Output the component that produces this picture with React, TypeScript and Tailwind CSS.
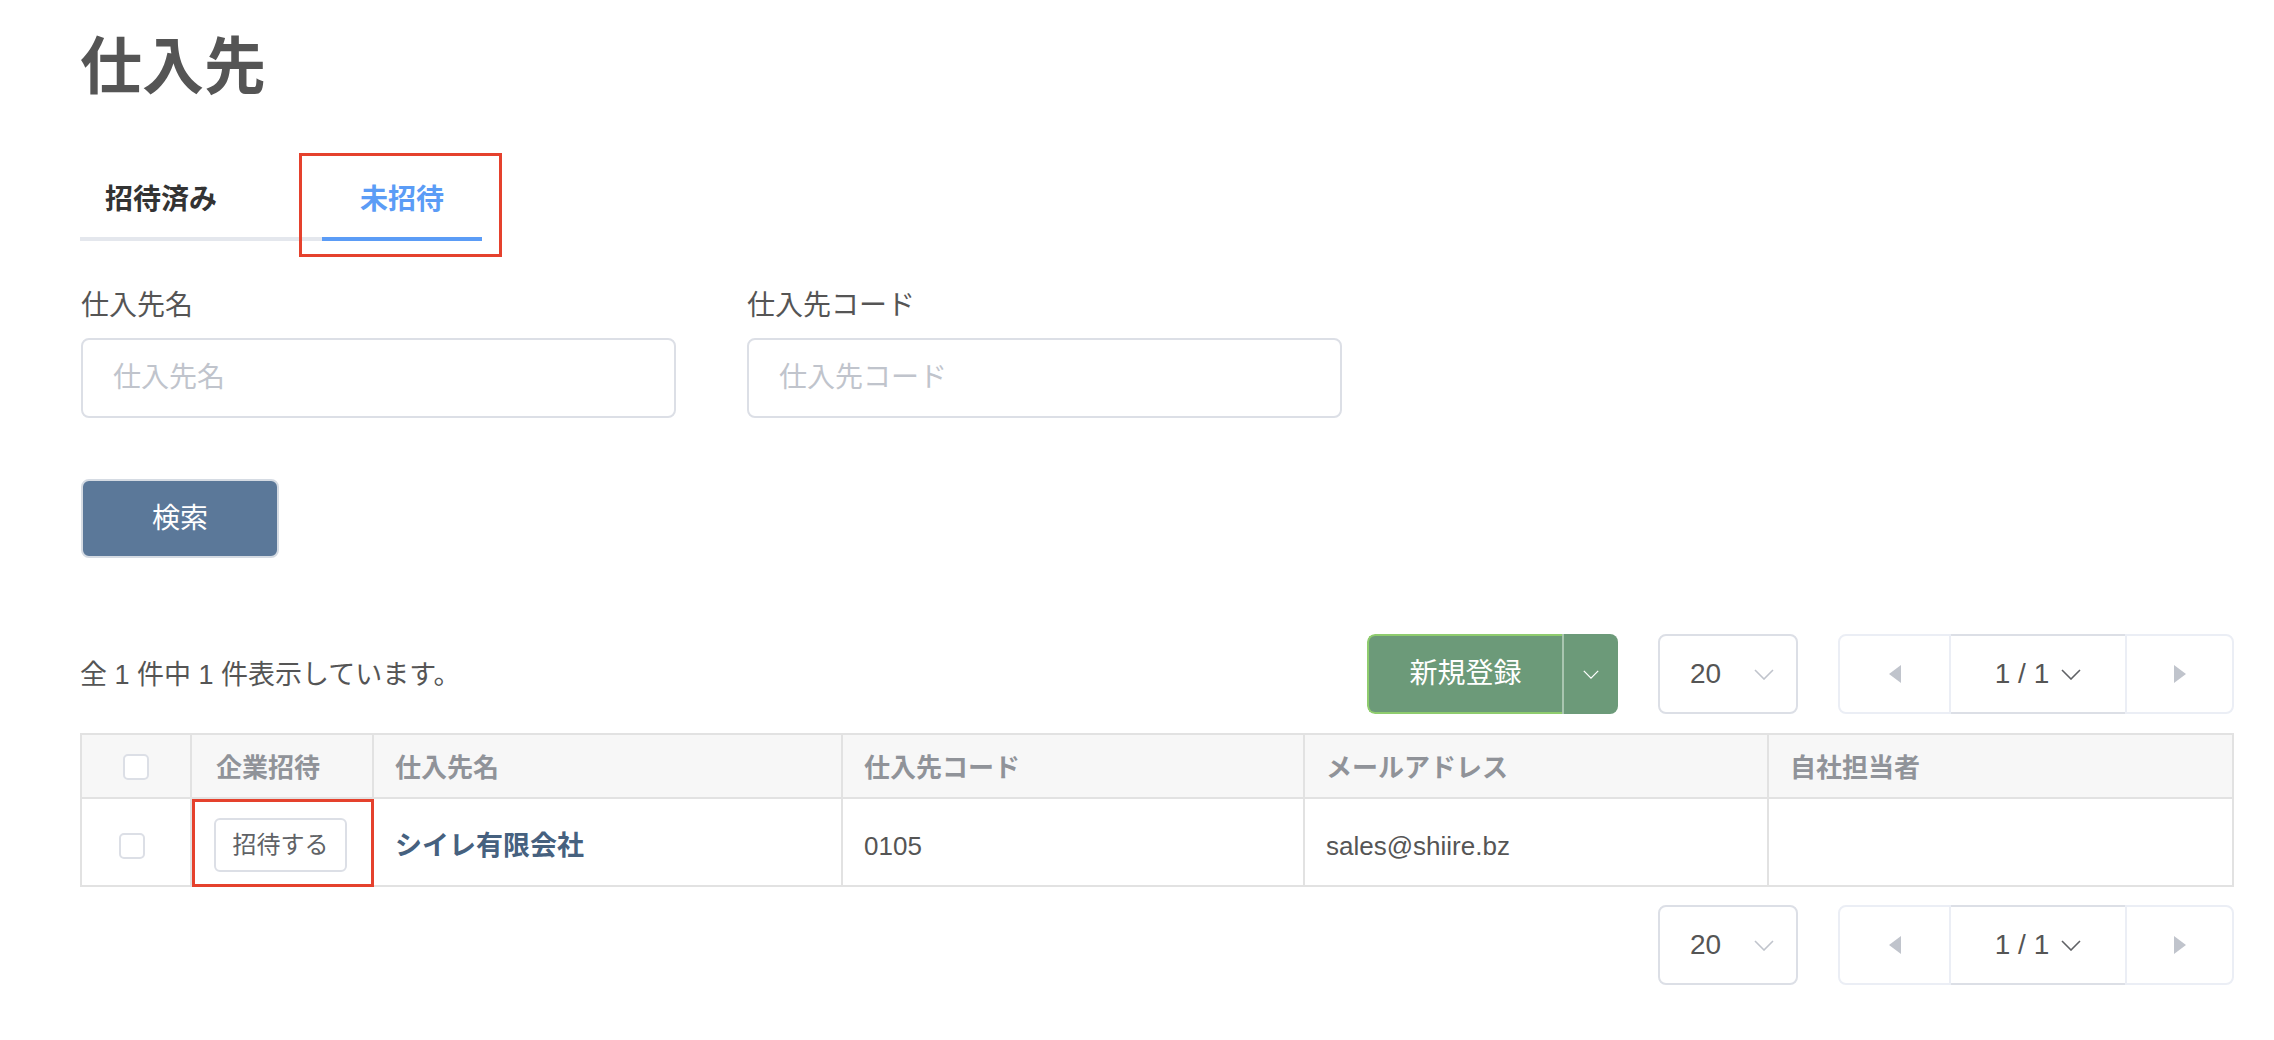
import React from 'react';

function Chevron({ color = '#c0c4cc', w = 20, h = 11 }: { color?: string; w?: number; h?: number }) {
  return (
    <svg width={w} height={h} viewBox="0 0 20 11" fill="none">
      <polyline points="1,1 10,10 19,1" stroke={color} strokeWidth="1.6" />
    </svg>
  );
}

function PageSize() {
  return (
    <div className="flex h-[80px] w-[140px] items-center rounded-[8px] border-2 border-[#dcdfe6] bg-white pl-[30px]">
      <span className="text-[28px] leading-none text-[#555]">20</span>
      <span className="ml-[33px]">
        <Chevron />
      </span>
    </div>
  );
}

function Pager() {
  return (
    <div className="flex h-[80px] w-[396px] rounded-[8px] border-2 border-[#ebeef5] bg-white">
      <div className="flex w-[111px] items-center justify-center border-r-2 border-[#ebeef5]">
        <svg width="12" height="18" viewBox="0 0 12 18">
          <polygon points="12,0 0,9 12,18" fill="#c0c4cc" />
        </svg>
      </div>
      <div className="-my-[2px] flex w-[174px] items-center justify-center gap-[12px] border-y-2 border-[#dcdfe6]">
        <span className="text-[28px] leading-none text-[#555]">1 / 1</span>
        <Chevron color="#606266" w={20} h={11} />
      </div>
      <div className="flex flex-1 items-center justify-center border-l-2 border-[#ebeef5]">
        <svg width="12" height="18" viewBox="0 0 12 18">
          <polygon points="0,0 12,9 0,18" fill="#c0c4cc" />
        </svg>
      </div>
    </div>
  );
}

function Checkbox() {
  return <div className="h-[26px] w-[26px] rounded-[5px] border-2 border-[#dcdfe6] bg-white" />;
}

export default function App() {
  const cols = 'grid grid-cols-[110px_182px_469px_462px_464px_1fr]';

  return (
    <div className="min-h-screen w-full bg-white pl-[80px] pr-[40px] pt-[37px] font-['Liberation_Sans','Noto_Sans_CJK_JP',sans-serif]">
      <h1 className="text-[62px] font-bold leading-none text-[#555]">仕入先</h1>

      {/* tabs */}
      <div className="mt-[87px] flex w-[402px] border-b-4 border-[#e4e7ed] pl-[1px]">
        <div className="w-[241px] pb-[23px] pl-[24px] text-[28px] font-semibold leading-[28px] text-[#333]">
          招待済み
        </div>
        <div className="relative -mb-[4px] w-[160px] border-b-4 border-[#5b9cf6] pb-[23px] text-center text-[28px] font-semibold leading-[28px] text-[#5b9cf6]">
          未招待
          <div className="pointer-events-none absolute -bottom-[20px] -left-[23px] -right-[20px] -top-[33px] border-[3px] border-[#e5412d]" />
        </div>
      </div>

      {/* search form */}
      <div className="mt-[51px] flex gap-[71px] pl-[1px]">
        <div className="flex flex-col">
          <label className="text-[28px] leading-[28px] text-[#555]">仕入先名</label>
          <input
            placeholder="仕入先名"
            className="mt-[18px] h-[80px] w-[595px] rounded-[8px] border-2 border-[#dcdfe6] px-[30px] text-[28px] text-[#555] placeholder-[#c0c4cc] outline-none"
          />
        </div>
        <div className="flex flex-col">
          <label className="text-[28px] leading-[28px] text-[#555]">仕入先コード</label>
          <input
            placeholder="仕入先コード"
            className="mt-[18px] h-[80px] w-[595px] rounded-[8px] border-2 border-[#dcdfe6] px-[30px] text-[28px] text-[#555] placeholder-[#c0c4cc] outline-none"
          />
        </div>
      </div>

      <button className="ml-[1px] mt-[61px] flex h-[79px] w-[198px] items-center justify-center rounded-[8px] border-2 border-[#d5dbe3] bg-[#5b7899] text-[28px] text-white">
        検索
      </button>

      {/* toolbar */}
      <div className="mt-[76px] flex h-[80px] items-center">
        <p className="pt-[2px] text-[27px] text-[#555]">全 1 件中 1 件表示しています。</p>
        <div className="ml-auto flex items-center gap-[40px]">
          <div className="flex h-[80px] overflow-hidden rounded-[8px]">
            <button className="flex w-[195px] items-center justify-center rounded-l-[8px] border-2 border-r-0 border-[#8fcc6e] bg-[#6c9a79] text-[28px] text-white">
              新規登録
            </button>
            <button className="flex w-[56px] items-center justify-center border-l-2 border-[#a9c6b0] bg-[#6c9a79]">
              <Chevron color="#ffffff" w={16} h={9} />
            </button>
          </div>
          <PageSize />
          <Pager />
        </div>
      </div>

      {/* table */}
      <div className="mt-[19px] border-2 border-[#e2e2e2]">
        <div className={`${cols} h-[64px] border-b-2 border-[#e2e2e2] bg-[#f7f7f7] text-[26px] font-bold text-[#909399]`}>
          <div className="flex items-center justify-center border-r-2 border-[#e2e2e2] pt-[2px]">
            <Checkbox />
          </div>
          <div className="flex items-center border-r-2 border-[#e2e2e2] pl-[24px] pt-[4px]">企業招待</div>
          <div className="flex items-center border-r-2 border-[#e2e2e2] pl-[21px] pt-[4px]">仕入先名</div>
          <div className="flex items-center border-r-2 border-[#e2e2e2] pl-[21px] pt-[4px]">仕入先コード</div>
          <div className="flex items-center border-r-2 border-[#e2e2e2] pl-[21px] pt-[4px]">メールアドレス</div>
          <div className="flex items-center pl-[21px] pt-[4px]">自社担当者</div>
        </div>
        <div className={`${cols} h-[86px] text-[26px] text-[#555]`}>
          <div className="flex items-center justify-center border-r-2 border-[#e2e2e2] pr-[8px] pt-[8px]">
            <Checkbox />
          </div>
          <div className="relative flex items-center border-r-2 border-[#e2e2e2] pl-[22px] pt-[6px]">
            <button className="flex h-[54px] w-[133px] items-center justify-center rounded-[6px] border-2 border-[#dcdfe6] bg-white text-[24px] text-[#606266]">
              招待する
            </button>
            <div className="pointer-events-none absolute -bottom-[2px] -right-[2px] left-0 top-0 border-[3px] border-[#e5412d]" />
          </div>
          <div className="flex items-center border-r-2 border-[#e2e2e2] pl-[21px] pt-[8px] text-[27px] font-semibold text-[#46617f]">
            シイレ有限会社
          </div>
          <div className="flex items-center border-r-2 border-[#e2e2e2] pl-[21px] pt-[8px]">0105</div>
          <div className="flex items-center border-r-2 border-[#e2e2e2] pl-[21px] pt-[8px]">sales@shiire.bz</div>
          <div className="flex items-center pl-[21px]" />
        </div>
      </div>

      {/* bottom pager */}
      <div className="mt-[18px] flex justify-end gap-[40px]">
        <PageSize />
        <Pager />
      </div>
    </div>
  );
}
